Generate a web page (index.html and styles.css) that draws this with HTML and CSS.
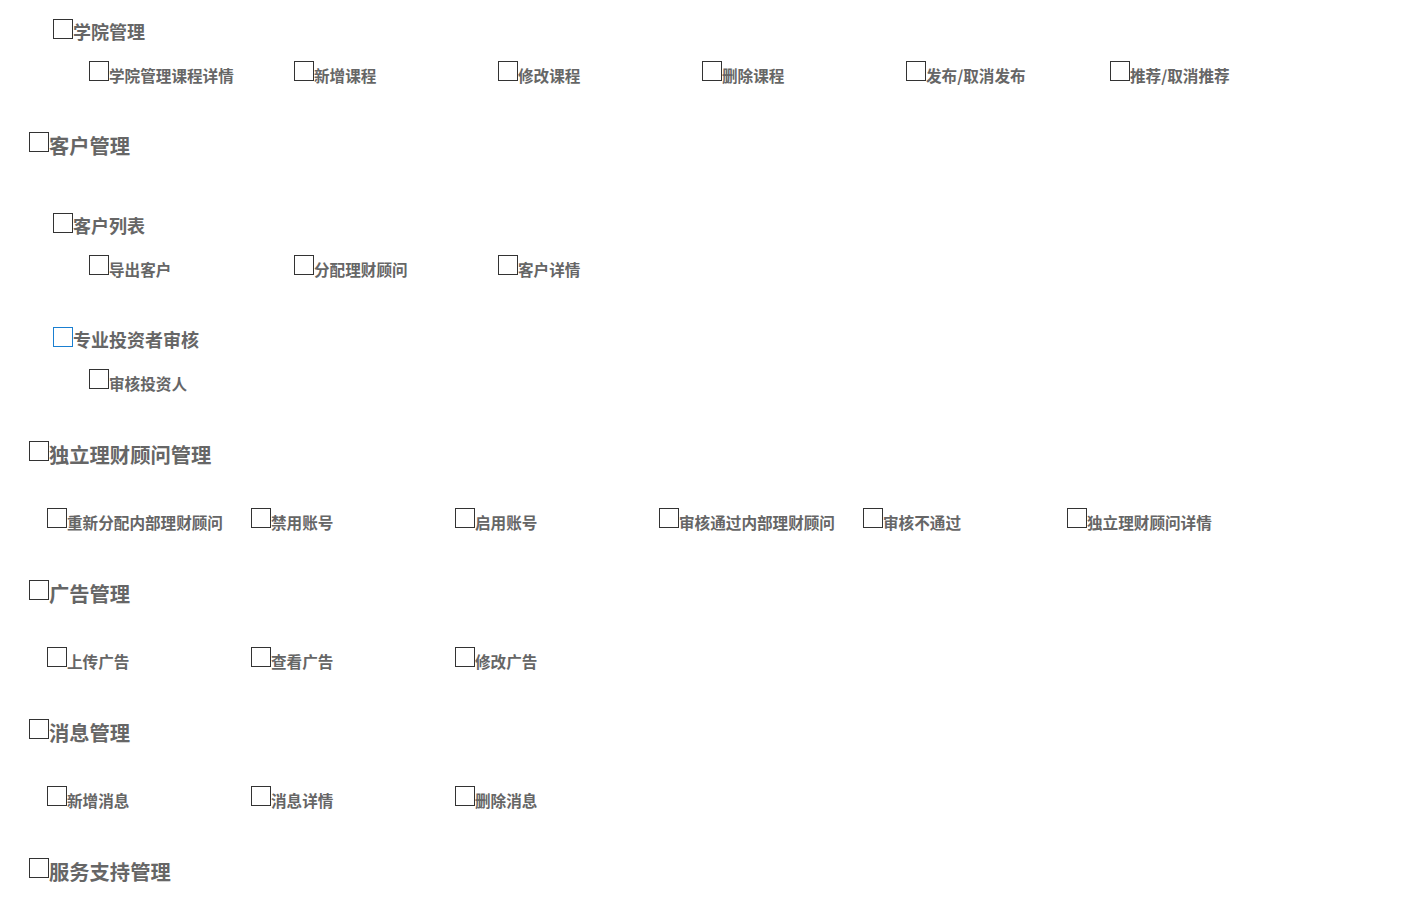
FILE: index.html
```html
<!DOCTYPE html>
<html lang="zh-CN">
<head>
<meta charset="utf-8">
<title>权限设置</title>
<link rel="stylesheet" href="styles.css">
</head>
<body>
<div class="perm">
  <section class="group">
    <div class="row sub"><label class="item"><input type="checkbox" class="box"><span class="txt">学院管理</span></label></div>
    <div class="row leaf-row l3 first">
      <label class="leaf"><input type="checkbox" class="box"><span class="txt">学院管理课程详情</span></label>
      <label class="leaf"><input type="checkbox" class="box"><span class="txt">新增课程</span></label>
      <label class="leaf"><input type="checkbox" class="box"><span class="txt">修改课程</span></label>
      <label class="leaf"><input type="checkbox" class="box"><span class="txt">删除课程</span></label>
      <label class="leaf"><input type="checkbox" class="box"><span class="txt">发布/取消发布</span></label>
      <label class="leaf"><input type="checkbox" class="box"><span class="txt">推荐/取消推荐</span></label>
    </div>
  </section>

  <section class="group">
    <div class="row top top-sub"><label class="item"><input type="checkbox" class="box"><span class="txt">客户管理</span></label></div>
    <div class="row sub"><label class="item"><input type="checkbox" class="box"><span class="txt">客户列表</span></label></div>
    <div class="row leaf-row l3">
      <label class="leaf"><input type="checkbox" class="box"><span class="txt">导出客户</span></label>
      <label class="leaf"><input type="checkbox" class="box"><span class="txt">分配理财顾问</span></label>
      <label class="leaf"><input type="checkbox" class="box"><span class="txt">客户详情</span></label>
    </div>
    <div class="row sub"><label class="item"><input type="checkbox" class="box focus"><span class="txt">专业投资者审核</span></label></div>
    <div class="row leaf-row l3">
      <label class="leaf"><input type="checkbox" class="box"><span class="txt">审核投资人</span></label>
    </div>
  </section>

  <section class="group">
    <div class="row top"><label class="item"><input type="checkbox" class="box"><span class="txt">独立理财顾问管理</span></label></div>
    <div class="row leaf-row l2">
      <label class="leaf"><input type="checkbox" class="box"><span class="txt">重新分配内部理财顾问</span></label>
      <label class="leaf"><input type="checkbox" class="box"><span class="txt">禁用账号</span></label>
      <label class="leaf"><input type="checkbox" class="box"><span class="txt">启用账号</span></label>
      <label class="leaf"><input type="checkbox" class="box"><span class="txt">审核通过内部理财顾问</span></label>
      <label class="leaf"><input type="checkbox" class="box"><span class="txt">审核不通过</span></label>
      <label class="leaf"><input type="checkbox" class="box"><span class="txt">独立理财顾问详情</span></label>
    </div>
  </section>

  <section class="group">
    <div class="row top"><label class="item"><input type="checkbox" class="box"><span class="txt">广告管理</span></label></div>
    <div class="row leaf-row l2">
      <label class="leaf"><input type="checkbox" class="box"><span class="txt">上传广告</span></label>
      <label class="leaf"><input type="checkbox" class="box"><span class="txt">查看广告</span></label>
      <label class="leaf"><input type="checkbox" class="box"><span class="txt">修改广告</span></label>
    </div>
  </section>

  <section class="group">
    <div class="row top"><label class="item"><input type="checkbox" class="box"><span class="txt">消息管理</span></label></div>
    <div class="row leaf-row l2">
      <label class="leaf"><input type="checkbox" class="box"><span class="txt">新增消息</span></label>
      <label class="leaf"><input type="checkbox" class="box"><span class="txt">消息详情</span></label>
      <label class="leaf"><input type="checkbox" class="box"><span class="txt">删除消息</span></label>
    </div>
  </section>

  <section class="group">
    <div class="row top"><label class="item"><input type="checkbox" class="box"><span class="txt">服务支持管理</span></label></div>
  </section>
</div>
</body>
</html>
```

FILE: styles.css
```css
html, body {
  margin: 0;
  padding: 0;
  background: #fff;
}
body {
  font-family: "Noto Sans CJK SC", "Noto Sans", sans-serif;
  color: #666;
  overflow: hidden;
}
.perm {
  padding: 19px 0 0 29px;
}
.row {
  display: flex;
  align-items: flex-start;
}
.item, .leaf {
  display: flex;
  align-items: flex-start;
  cursor: pointer;
}
.box {
  -webkit-appearance: none;
  appearance: none;
  box-sizing: border-box;
  width: 20px;
  height: 20px;
  margin: 0;
  border: 1px solid #333;
  border-radius: 0;
  background: #fff;
  flex: none;
}
.box.focus {
  border-color: #1a7fd1;
}
.txt {
  display: block;
  white-space: nowrap;
  line-height: 20px;
}

/* level 1 */
.top .txt {
  font-size: 20.3px;
  font-weight: 700;
  margin-top: 3px;
}
.top {
  margin-bottom: 44px;
}
.top.top-sub {
  margin-bottom: 58px;
}

/* level 2 */
.sub {
  padding-left: 24px;
  margin-bottom: 20px;
}
.sub .txt {
  font-size: 18px;
  font-weight: 700;
  margin-top: 2px;
}

/* leaf rows */
.leaf-row {
  margin-bottom: 48px;
}
.leaf-row.first {
  margin-bottom: 47px;
}
.leaf-row.l3 {
  padding-left: 60px;
}
.leaf-row.l2 {
  padding-left: 18px;
}
.leaf {
  width: 204px;
}
.l3 .leaf:first-child {
  width: 205px;
}
.leaf .txt {
  font-size: 15.6px;
  font-weight: 700;
  margin-top: 4px;
}
```
